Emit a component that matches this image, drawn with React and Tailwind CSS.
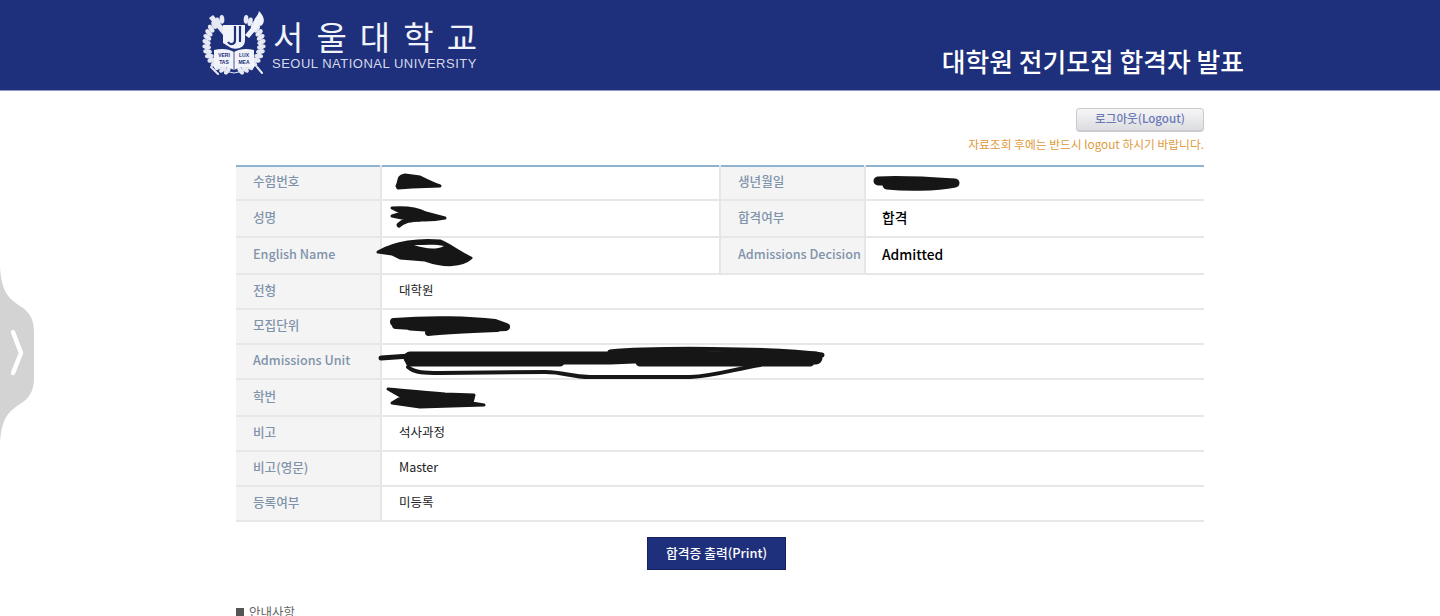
import React from 'react';

const font = "font-['Noto_Sans_CJK_KR','Noto_Sans',sans-serif]";

function Emblem() {
  const leaves = [];
  for (let i = 0; i < 15; i++) {
    const a = (104 + i * 10) * (Math.PI / 180);
    const x = 32 + 27.5 * Math.cos(a);
    const y = 33 + 27.5 * Math.sin(a);
    const deg = (a * 180) / Math.PI + 90;
    leaves.push({ x, y, deg: deg + 22 });
    leaves.push({ x: 64 - x, y, deg: 180 - deg - 22 });
  }
  return (
    <svg viewBox="0 0 64 64" className="w-[64px] h-[64px] shrink-0">
      <path d="M10 50 A26 26 0 0 1 8 22 M54 50 A26 26 0 0 0 56 22 M10 50 C16 58 24 61 32 62 C40 61 48 58 54 50" fill="none" stroke="#dfe3f0" strokeWidth="1.2" />
      {leaves.map((l, i) => (
        <ellipse key={i} cx={l.x} cy={l.y} rx="2.4" ry="4.4" fill="#e6e9f4" transform={`rotate(${l.deg} ${l.x} ${l.y})`} />
      ))}
      <path d="M7 7 L11 4 L25 20 L21 24 Z" fill="#e6e9f4" />
      <path d="M43 24 L54 11 L58 14 L47 27 Z" fill="#f1f3fa" />
      <path d="M52 11 C52 6 56 6 57 0 C62 5 64 11 59 15 Z" fill="#f1f3fa" />
      <path d="M21 14 H43 V29 C43 37 35 39 29 37 L21 32 Z" fill="#f1f3fa" />
      <path d="M33 15 V29 C33 34 28 34 26 31 M38 15 V31" stroke="#1e2f7b" strokeWidth="2.2" fill="none" />
      <path d="M12 39 C20 37 27 38 32 41 C37 38 44 37 52 39 V57 C44 55 37 56 32 59 C27 56 20 55 12 57 Z" fill="#f1f3fa" />
      <path d="M32 41 V59" stroke="#1e2f7b" strokeWidth="0.8" />
      <text x="22" y="45.5" textAnchor="middle" fontSize="5" fontWeight="700" fill="#1e2f7b" fontFamily="Liberation Sans">VERI</text>
      <text x="42" y="45.5" textAnchor="middle" fontSize="5" fontWeight="700" fill="#1e2f7b" fontFamily="Liberation Sans">LUX</text>
      <text x="22" y="52.5" textAnchor="middle" fontSize="5" fontWeight="700" fill="#1e2f7b" fontFamily="Liberation Sans">TAS</text>
      <text x="42" y="52.5" textAnchor="middle" fontSize="5" fontWeight="700" fill="#1e2f7b" fontFamily="Liberation Sans">MEA</text>
      <path d="M9 56 L16 63 M55 56 L60 62" stroke="#e6e9f4" strokeWidth="2" strokeLinecap="round" />
    </svg>
  );
}

const labelCls = 'bg-[#f5f4f4] pl-[17px] pb-[3px] text-[12.6px] font-medium text-[#7f93ab] whitespace-nowrap';

function Label({ children }) {
  return <td className={`border-r-2 border-[#e4e6e9] ${labelCls}`}>{children}</td>;
}

function Label2({ children }) {
  return <td className={`border-x-2 border-[#e4e6e9] ${labelCls}`}>{children}</td>;
}

function Value({ children, scribble, strong, colSpan }) {
  return (
    <td colSpan={colSpan} className={`relative whitespace-nowrap ${strong ? 'pl-[16px] pb-[3px] text-[13.8px] font-medium text-black' : 'pl-[17px] pb-[2px] text-[12.5px] text-[#222]'}`}>
      {children}
      {scribble}
    </td>
  );
}

const ink = { fill: '#161616', stroke: '#161616', strokeLinecap: 'round', strokeLinejoin: 'round' };
const line = { fill: 'none', stroke: '#161616', strokeLinecap: 'round', strokeLinejoin: 'round' };

const s1 = (
  <svg viewBox="382 166 100 35" className="absolute left-0 top-0 w-[100px] h-[35px] overflow-visible">
    <path {...ink} strokeWidth="3" d="M397 185 C400 180 397 175 405 174 L420 176 C428 180 432 182 440 185 L412 186 L398 187 Z" />
  </svg>
);
const s2 = (
  <svg viewBox="866 166 100 35" className="absolute left-0 top-0 w-[100px] h-[35px] overflow-visible">
    <path {...line} strokeWidth="9" d="M878 180 C895 179 925 180 955 182 C935 186 905 186 887 184" />
  </svg>
);
const s3 = (
  <svg viewBox="382 201 100 36" className="absolute left-0 top-0 w-[100px] h-[36px] overflow-visible">
    <path {...ink} strokeWidth="3" d="M392 208 C405 207 418 209 426 213 L445 218 C430 221 414 221 392 216 L402 213 Z" />
    <path {...line} strokeWidth="5" d="M399 225 C404 220 410 220 420 219" />
  </svg>
);
const s4 = (
  <svg viewBox="382 238 100 36" className="absolute left-0 top-0 w-[100px] h-[36px] overflow-visible">
    <path {...ink} strokeWidth="3" d="M378 252 C395 242 420 239 440 241 C452 246 458 252 471 258 C462 266 445 267 425 260 L400 258 L392 254 Z" />
    <path fill="#fff" d="M414 245 C425 245 436 244 444 246 C436 250 426 249 414 245 Z" />
  </svg>
);
const s5 = (
  <svg viewBox="382 310 130 34" className="absolute left-0 top-0 w-[130px] h-[34px] overflow-visible">
    <path {...line} strokeWidth="8" d="M394 322 C430 319 470 320 495 323 L506 327 C480 329 450 328 396 325" />
    <path {...line} strokeWidth="6" d="M428 333 C445 331 470 330 497 329" />
    <path {...line} strokeWidth="5" d="M410 328 L440 330" />
  </svg>
);
const s6 = (
  <svg viewBox="382 345 450 35" className="absolute left-0 top-0 w-[450px] h-[35px] overflow-visible">
    <path {...line} strokeWidth="13" d="M410 358 L610 358 C640 356 680 356 720 358 L816 358" />
    <path {...line} strokeWidth="5" d="M381 358 L410 356 M610 352 C650 348 770 348 822 355" />
    <path {...line} strokeWidth="9" d="M410 362 L560 362 M640 362 L810 362" />
    <path {...line} strokeWidth="4" d="M408 367 C415 373 425 373 440 373 L545 372 C565 372 570 377 590 377 L690 377 C715 376 735 369 760 365" />
  </svg>
);
const s7 = (
  <svg viewBox="382 380 110 37" className="absolute left-0 top-0 w-[110px] h-[37px] overflow-visible">
    <path {...ink} strokeWidth="3" d="M388 389 C400 390 420 392 445 394 L474 395 L472 403 L484 405 L420 407 L392 403 L402 397 Z" />
  </svg>
);

export default function App() {
  return (
    <div className={`relative h-[616px] overflow-hidden bg-white ${font}`}>
      <header className="h-[91px] bg-[#1e2f7b] border-b border-[#8f9ac4] flex justify-between pl-[202px] pr-[196px]">
        <div className="flex items-center gap-[6px] pb-[4px]">
          <Emblem />
          <div className="text-[#f1f3fa] w-[206px] flex flex-col pt-[2px]">
            <div className="flex justify-between text-[33px] leading-[40px] font-normal px-[1px]">
              <span>서</span><span>울</span><span>대</span><span>학</span><span>교</span>
            </div>
            <div className="font-['Liberation_Sans',sans-serif] text-[13px] leading-[16px] tracking-[0.5px] whitespace-nowrap text-[#d5d9ea]">
              SEOUL NATIONAL UNIVERSITY
            </div>
          </div>
        </div>
        <h1 className="self-end pb-[11px] text-[25.8px] leading-[36px] font-medium text-white whitespace-nowrap">대학원 전기모집 합격자 발표</h1>
      </header>

      <main className="ml-[236px] w-[968px]">
        <div className="flex flex-col items-end">
          <button className="mt-[17px] w-[128px] h-[24px] rounded-[4px] border border-[#c9cbd0] border-b-2 bg-gradient-to-b from-[#f6f6f7] to-[#dcdde0] text-[11.6px] leading-[18px] pb-[3px] font-medium text-[#6b78b8]">
            로그아웃(Logout)
          </button>
          <p className="mt-[3px] text-[11.75px] leading-[18px] text-[#e09a3c]">자료조회 후에는 반드시 logout 하시기 바랍니다.</p>
        </div>

        <table className="mt-[12px] w-[968px] table-fixed border-collapse border-t-2 border-[#8db3d1] [&_tr]:border-b-2 [&_tr]:border-[#e6e7e9]">
          <colgroup>
            <col className="w-[145px]" />
            <col className="w-[339px]" />
            <col className="w-[145px]" />
            <col className="w-[339px]" />
          </colgroup>
          <tbody>
            <tr className="h-[34px]">
              <Label>수험번호</Label>
              <Value scribble={s1} />
              <Label2>생년월일</Label2>
              <Value scribble={s2} />
            </tr>
            <tr className="h-[37px]">
              <Label>성명</Label>
              <Value scribble={s3} />
              <Label2>합격여부</Label2>
              <Value strong>합격</Value>
            </tr>
            <tr className="h-[37px]">
              <Label>English Name</Label>
              <Value scribble={s4} />
              <Label2>Admissions Decision</Label2>
              <Value strong>Admitted</Value>
            </tr>
            <tr className="h-[35px]"><Label>전형</Label><Value colSpan={3}>대학원</Value></tr>
            <tr className="h-[35px]"><Label>모집단위</Label><Value colSpan={3} scribble={s5} /></tr>
            <tr className="h-[35px]"><Label>Admissions Unit</Label><Value colSpan={3} scribble={s6} /></tr>
            <tr className="h-[37px]"><Label>학번</Label><Value colSpan={3} scribble={s7} /></tr>
            <tr className="h-[35px]"><Label>비고</Label><Value colSpan={3}>석사과정</Value></tr>
            <tr className="h-[35px]"><Label>비고(영문)</Label><Value colSpan={3}>Master</Value></tr>
            <tr className="h-[35px]"><Label>등록여부</Label><Value colSpan={3}>미등록</Value></tr>
          </tbody>
        </table>

        <div className="flex justify-center mt-[15px] pr-[7px]">
          <button className="w-[139px] h-[33px] pb-[1px] bg-[#1e2f7b] border border-[#14215c] text-[12.8px] font-medium text-white">
            합격증 출력(Print)
          </button>
        </div>

        <div className="mt-[33px] flex items-center gap-[5px] text-[12.5px] text-[#666]">
          <span className="w-[8px] h-[8px] bg-[#555]" />
          안내사항
        </div>
      </main>

      <svg viewBox="0 0 36 190" className="absolute left-0 top-[260px] w-[36px] h-[190px]">
        <path d="M0 8 C2 32 8 38 20 46 C30 52 34 60 34 72 V118 C34 130 30 138 20 144 C8 152 2 158 0 182 Z" fill="#d3d3d3" />
        <path d="M13 72 L21 93 L13 113" fill="none" stroke="#fff" strokeWidth="4.5" strokeLinecap="round" strokeLinejoin="round" />
      </svg>
    </div>
  );
}
